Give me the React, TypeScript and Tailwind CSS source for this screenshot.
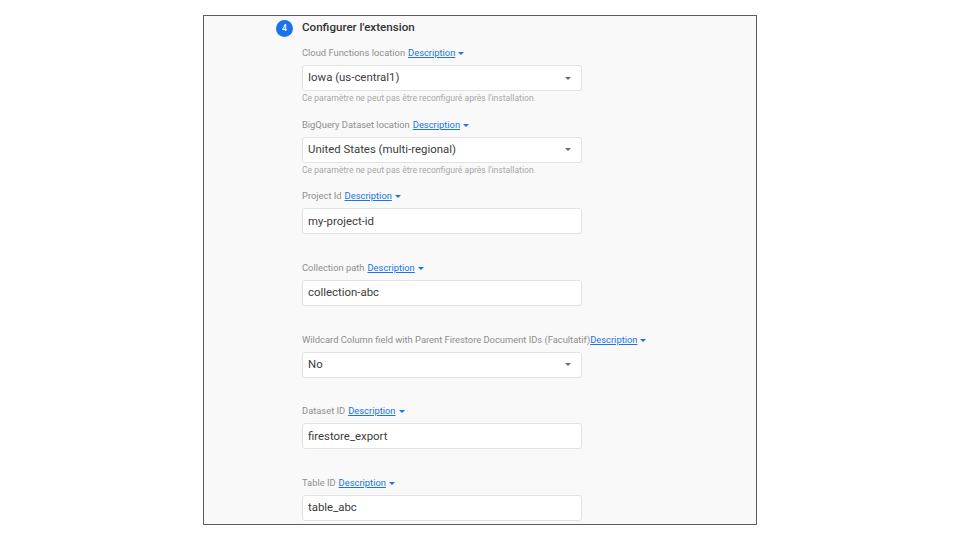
const fields = [
  { label: "Cloud Functions location", value: "Iowa (us-central1)", select: true, locked: true },
  { label: "BigQuery Dataset location", value: "United States (multi-regional)", select: true, locked: true },
  { label: "Project Id", value: "my-project-id" },
  { label: "Collection path", value: "collection-abc" },
  { label: "Wildcard Column field with Parent Firestore Document IDs (Facultatif)", value: "No", select: true, tight: true },
  { label: "Dataset ID", value: "firestore_export" },
  { label: "Table ID", value: "table_abc" },
];

function Caret({ className }: { className: string }) {
  return (
    <svg width="6" height="3" viewBox="0 0 6 3" className={className}>
      <path d="M0 0h6L3 3z" fill="currentColor" />
    </svg>
  );
}

function Field({ f }: { f: (typeof fields)[number] }) {
  return (
    <div className="flex h-[71.67px] shrink-0 flex-col">
      <div className="flex h-[12px] items-center text-[9.35px] leading-[12px] text-[#8e8e8e]">
        <span>{f.label}</span>
        {!f.tight && <span className="w-[3px]" />}
        <span className="text-[#1a73e8] underline">Description</span>
        <Caret className="ml-[3px] mt-[1px] text-[#1a73e8]" />
      </div>
      <div className="mt-[6px] flex h-[26px] w-[280px] items-center rounded-[3px] border border-[#e2e2e2] bg-white pl-[5px] pr-[10px] text-[11.4px] text-[#3c3c3c]">
        <span className="flex-1">{f.value}</span>
        {f.select && <Caret className="text-[#6b6b6b]" />}
      </div>
      {f.locked && (
        <div className="mt-[1px] h-[12px] text-[8.6px] leading-[12px] text-[#a8a8a8]">
          Ce paramètre ne peut pas être reconfiguré après l'installation.
        </div>
      )}
    </div>
  );
}

export default function App() {
  return (
    <div className="h-[540px] w-[960px] overflow-hidden bg-white pl-[203px] pt-[15px] font-['Roboto',sans-serif]">
      <div className="h-[510px] w-[554px] overflow-hidden border border-[#5c5c5c] bg-[#f9f9f9] pt-[3px]">
        {/* en-tête de l'étape */}
        <div className="flex h-[18px] items-center pl-[72px]">
          <div className="flex h-[17px] w-[17px] items-center justify-center rounded-full bg-[#1a73e8] text-[8.5px] font-medium text-white">
            4
          </div>
          <div className="ml-[9px] text-[11.6px] font-medium text-[#333]">Configurer l'extension</div>
        </div>
        <div className="ml-[98px] mt-[10px] flex flex-col">
          {fields.map((f) => (
            <Field key={f.label} f={f} />
          ))}
        </div>
      </div>
    </div>
  );
}
